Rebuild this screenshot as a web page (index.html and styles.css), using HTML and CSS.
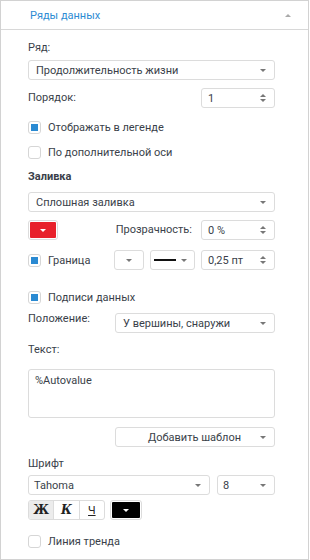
FILE: index.html
```html
<!DOCTYPE html>
<html lang="ru">
<head>
<meta charset="utf-8">
<link rel="stylesheet" href="styles.css">
</head>
<body>
<div class="panel">
  <div class="header">
    <span class="title">Ряды данных</span>
    <span class="caret-up"></span>
  </div>
  <div class="content">
    <div class="label m-top10">Ряд:</div>
    <div class="select m-top4"><span>Продолжительность жизни</span><span class="arrow"></span></div>

    <div class="row m-top8">
      <span class="label">Порядок:</span>
      <div class="spin"><span>1</span><span class="spinner"><i class="up"></i><i class="down"></i></span></div>
    </div>

    <div class="check m-top9"><span class="box on"></span><span>Отображать в легенде</span></div>
    <div class="check m-top5"><span class="box"></span><span>По дополнительной оси</span></div>

    <div class="label bold m-top7">Заливка</div>
    <div class="select m-top7"><span>Сплошная заливка</span><span class="arrow"></span></div>

    <div class="row m-top8">
      <div class="color red"><span class="arrow white"></span></div>
      <div class="right-group">
        <span class="label">Прозрачность:</span>
        <div class="spin"><span>0 %</span><span class="spinner"><i class="up"></i><i class="down"></i></span></div>
      </div>
    </div>

    <div class="row m-top10">
      <div class="check"><span class="box on"></span><span>Граница</span></div>
      <div class="right-group">
        <div class="mini"><span class="arrow"></span></div>
        <div class="linesel"><span class="line"></span><span class="arrow"></span></div>
        <div class="spin"><span>0,25 пт</span><span class="spinner"><i class="up"></i><i class="down"></i></span></div>
      </div>
    </div>

    <div class="check m-top17"><span class="box on"></span><span>Подписи данных</span></div>

    <div class="row top m-top6">
      <span class="label pos-label">Положение:</span>
      <div class="select wide"><span>У вершины, снаружи</span><span class="arrow"></span></div>
    </div>

    <div class="label m-top9">Текст:</div>
    <div class="textarea m-top11">%Autovalue</div>

    <div class="row end m-top9">
      <div class="select wide center"><span>Добавить шаблон</span><span class="arrow"></span></div>
    </div>

    <div class="label m-top9">Шрифт</div>
    <div class="row m-top3">
      <div class="select font"><span>Tahoma</span><span class="arrow"></span></div>
      <div class="select size"><span>8</span><span class="arrow"></span></div>
    </div>

    <div class="row start m-top5">
      <div class="biu">
        <span class="b-btn pressed">Ж</span>
        <span class="b-btn italic">К</span>
        <span class="b-btn under">Ч</span>
      </div>
      <div class="color black"><span class="arrow white"></span></div>
    </div>

    <div class="check m-top11"><span class="box"></span><span>Линия тренда</span></div>
  </div>
</div>
</body>
</html>
```

FILE: styles.css
```css
* { box-sizing: border-box; }
html, body { margin: 0; padding: 0; background: #fff; }
body {
  font-family: Roboto, "Open Sans", sans-serif;
  font-size: 11px;
  color: #3a3f4a;
}
.panel {
  width: 309px;
  height: 560px;
  border: 1px solid #d2d2d2;
  display: flex;
  flex-direction: column;
}
.header {
  height: 29px;
  border-bottom: 1px solid #d8d8d8;
  display: flex;
  align-items: center;
  justify-content: space-between;
  padding: 1px 17px 0 29px;
}
.title { color: #2d8bd3; font-size: 11px; }
.caret-up {
  width: 0; height: 0;
  border-left: 3px solid transparent;
  border-right: 3px solid transparent;
  border-bottom: 3px solid #aaa;
}
.content {
  padding-left: 27px;
  width: 274px;
  display: flex;
  flex-direction: column;
}
.label { line-height: 16px; }
.bold { font-weight: bold; }
.m-top3 { margin-top: 3px; }
.m-top4 { margin-top: 4px; }
.m-top5 { margin-top: 5px; }
.m-top6 { margin-top: 6px; }
.m-top7 { margin-top: 7px; }
.m-top8 { margin-top: 8px; }
.m-top9 { margin-top: 9px; }
.m-top10 { margin-top: 10px; }
.m-top11 { margin-top: 11px; }
.m-top17 { margin-top: 17px; }

.select, .spin, .mini, .linesel, .textarea, .color, .biu {
  border: 1px solid #dcdcdc;
  border-radius: 3px;
  background: #fff;
}
.select {
  height: 20px;
  display: flex;
  align-items: center;
  justify-content: space-between;
  padding: 0 8px 0 7px;
}
.select.wide { width: 160px; }
.select.center { justify-content: center; position: relative; }
.select.center .arrow { position: absolute; right: 8px; top: 8px; }
.select.font { width: 182px; padding-left: 5px; }
.select.size { width: 58px; padding-left: 5px; }
.arrow {
  width: 0; height: 0;
  border-left: 3px solid transparent;
  border-right: 3px solid transparent;
  border-top: 3px solid #777;
}
.arrow.white { border-top-color: #fff; }

.row {
  display: flex;
  align-items: center;
  justify-content: space-between;
}
.row.top { align-items: flex-start; }
.row.end { justify-content: flex-end; }
.row.start { justify-content: flex-start; gap: 5px; }
.pos-label { margin-top: -2px; }
.right-group { display: flex; align-items: center; gap: 6px; }
.right-group .label { margin-right: 3px; }

.spin {
  width: 74px;
  height: 20px;
  display: flex;
  align-items: center;
  justify-content: space-between;
  padding: 0 8px 0 6px;
}
.spinner {
  display: flex;
  flex-direction: column;
  gap: 2px;
}
.spinner i {
  display: block;
  width: 0; height: 0;
  border-left: 3px solid transparent;
  border-right: 3px solid transparent;
}
.spinner .up { border-bottom: 3px solid #777; }
.spinner .down { border-top: 3px solid #777; }

.check {
  display: flex;
  align-items: center;
  gap: 7px;
  height: 20px;
}
.box {
  width: 13px;
  height: 13px;
  border: 1px solid #d6d6d6;
  border-radius: 3px;
  display: flex;
  align-items: center;
  justify-content: center;
}
.box.on::after {
  content: "";
  width: 7px;
  height: 7px;
  background: #2a8ad2;
}

.color {
  width: 30px;
  height: 20px;
  padding: 1px;
  display: flex;
  position: relative;
}
.color::after {
  content: "";
  position: absolute;
  inset: 1px;
  border-radius: 1px;
}
.color.red::after { background: #e8212b; }
.color.black { width: 32px; }
.color.black::after { background: #000; }
.color .arrow { position: absolute; left: 50%; top: 8px; margin-left: -3px; z-index: 1; }

.mini {
  width: 30px; height: 20px;
  display: flex; align-items: center; justify-content: center;
}
.linesel {
  width: 45px; height: 20px;
  display: flex; align-items: center; justify-content: space-between;
  padding: 0 7px 0 3px;
}
.line { width: 22px; height: 2px; background: #111; }

.textarea {
  height: 49px;
  padding: 3px 6px;
  line-height: 16px;
}

.biu {
  display: flex;
  height: 20px;
  width: 77px;
  overflow: hidden;
}
.b-btn {
  flex: 1;
  display: flex;
  align-items: center;
  justify-content: center;
  font-family: "DejaVu Serif", "Liberation Serif", serif;
  font-size: 12px;
  color: #222;
  border-left: 1px solid #dcdcdc;
}
.b-btn:first-child { border-left: none; }
.b-btn.pressed { background: #ececec; font-weight: bold; }
.b-btn.italic { font-style: italic; font-weight: bold; }
.b-btn.under { text-decoration: underline; font-family: Roboto, sans-serif; font-size: 11px; font-weight: normal; }
```
